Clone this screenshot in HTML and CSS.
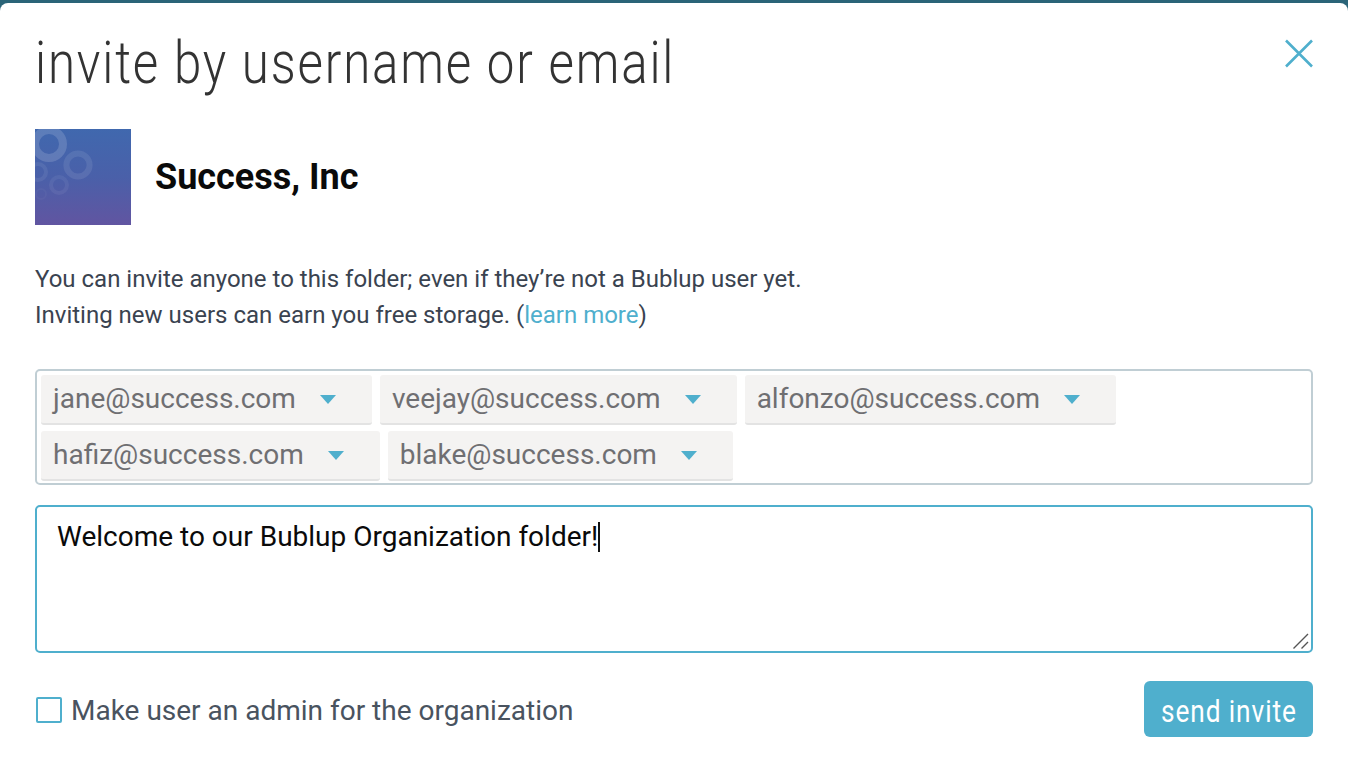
FILE: index.html
```html
<!DOCTYPE html>
<html lang="en">
<head>
<meta charset="utf-8">
<title>invite by username or email</title>
<link rel="stylesheet" href="styles.css">
</head>
<body>
<div class="modal">
  <header class="head">
    <h1 class="title">invite by username or email</h1>
    <button class="close" aria-label="close">
      <svg width="30" height="30" viewBox="0 0 30 30"><path d="M3 2.5 L29 28.5 M29 2.5 L3 28.5" fill="none" stroke="#4fafcd" stroke-width="2.6"/></svg>
    </button>
  </header>
  <div class="org">
    <svg class="avatar" width="96" height="96" viewBox="0 0 96 96">
      <defs><linearGradient id="g" x1="0" y1="0" x2="0" y2="1"><stop offset="0" stop-color="#4068ae"/><stop offset=".5" stop-color="#4a60a9"/><stop offset="1" stop-color="#6155a1"/></linearGradient></defs>
      <rect width="96" height="96" fill="url(#g)"/>
      <g fill="none" stroke="#fff">
        <circle cx="14" cy="15" r="14" stroke-width="8" stroke-opacity=".15"/>
        <circle cx="43" cy="36" r="11.6" stroke-width="6" stroke-opacity=".09"/>
        <circle cx="3" cy="43" r="8" stroke-width="4" stroke-opacity=".07"/>
        <circle cx="24" cy="56" r="8" stroke-width="4" stroke-opacity=".06"/>
        <circle cx="6" cy="65" r="5" stroke-width="2" stroke-opacity=".03"/>
      </g>
    </svg>
    <div class="org-name">Success, Inc</div>
  </div>
  <p class="intro">You can invite anyone to this folder; even if they’re not a Bublup user yet.<br>Inviting new users can earn you free storage. (<a href="#">learn more</a>)</p>
  <div class="chips">
    <div class="chip"><span>jane@success.com</span><i class="caret"></i></div>
    <div class="chip"><span>veejay@success.com</span><i class="caret"></i></div>
    <div class="chip"><span>alfonzo@success.com</span><i class="caret"></i></div>
    <div class="chip"><span>hafiz@success.com</span><i class="caret"></i></div>
    <div class="chip"><span>blake@success.com</span><i class="caret"></i></div>
  </div>
  <div class="message">Welcome to our Bublup Organization folder!<span class="cursor"></span>
    <svg class="grip" width="18" height="18" viewBox="0 0 18 18"><path d="M1.5 16.5 L16 2 M9.5 16.5 L16 10" fill="none" stroke="#555" stroke-width="1.4"/></svg>
  </div>
  <footer class="foot">
    <label class="admin"><span class="check"></span>Make user an admin for the organization</label>
    <button class="send"><span>send invite</span></button>
  </footer>
</div>
</body>
</html>
```
FILE: styles.css
```css
* { box-sizing: border-box; }
html, body { margin: 0; height: 772px; overflow: hidden; background: #2a6478; }
body { padding-top: 3px; font-family: Roboto, "Liberation Sans", sans-serif; }
.modal { height: 769px; background: #fff; border-radius: 8px 8px 0 0; padding: 0 35px; display: flex; flex-direction: column; }
.head { height: 126px; display: flex; justify-content: space-between; align-items: flex-start; }
.title { margin: 24px 0 0; font-size: 60px; line-height: 72px; font-weight: 300; letter-spacing: 2.24px; color: #333; transform: scaleX(.82); transform-origin: left center; white-space: nowrap; }
.close { margin: 35px 0 0; padding: 0; width: 30px; height: 30px; border: 0; background: none; }
.org { display: flex; align-items: center; gap: 24px; height: 96px; }
.avatar { display: block; }
.org-name { font-size: 36px; font-weight: 700; color: #0a0a0a; }
.intro { margin: 36px 0 0; font-size: 24px; line-height: 36px; color: #3a4350; }
.intro a { color: #4fafcd; text-decoration: none; }
.chips { margin: 36px 0 0; height: 116px; width: 1278px; border: 2px solid #c0ced4; border-radius: 5px; padding: 4px 4px 0; display: flex; flex-wrap: wrap; align-content: flex-start; gap: 6px 8px; }
.chip { height: 50px; padding: 0 36px 2px 12px; display: flex; align-items: center; gap: 24px; background: #f4f3f2; border-bottom: 2px solid #e3e3e3; border-radius: 3px; font-size: 28px; color: #6f6f72; }
.caret { width: 0; height: 0; margin-top: 2px; border-left: 8px solid transparent; border-right: 8px solid transparent; border-top: 9px solid #4fafcd; }
.message { position: relative; margin: 20px 0 0; width: 1278px; height: 148px; border: 2px solid #4fafcd; border-radius: 5px; padding: 12px 20px; font-size: 28px; line-height: 36px; color: #0a0a0a; }
.cursor { display: inline-block; width: 2px; height: 30px; background: #111; vertical-align: -6px; }
.grip { position: absolute; right: 1px; bottom: 1px; }
.foot { margin-top: 28px; display: flex; justify-content: space-between; align-items: center; height: 56px; }
.admin { display: flex; align-items: center; gap: 9px; font-size: 28px; color: #49535f; position: relative; top: 1px; }
.check { width: 26px; height: 26px; margin-left: 1px; border: 2px solid #4fafcd; border-radius: 2px; }
.send { width: 169px; height: 56px; border: 0; border-radius: 6px; background: #4fafcd; color: #fff; font-family: inherit; font-size: 32px; padding: 3px 0 0; }
.send span { display: inline-block; letter-spacing: 1.13px; transform: scaleX(.82); white-space: nowrap; }
```
